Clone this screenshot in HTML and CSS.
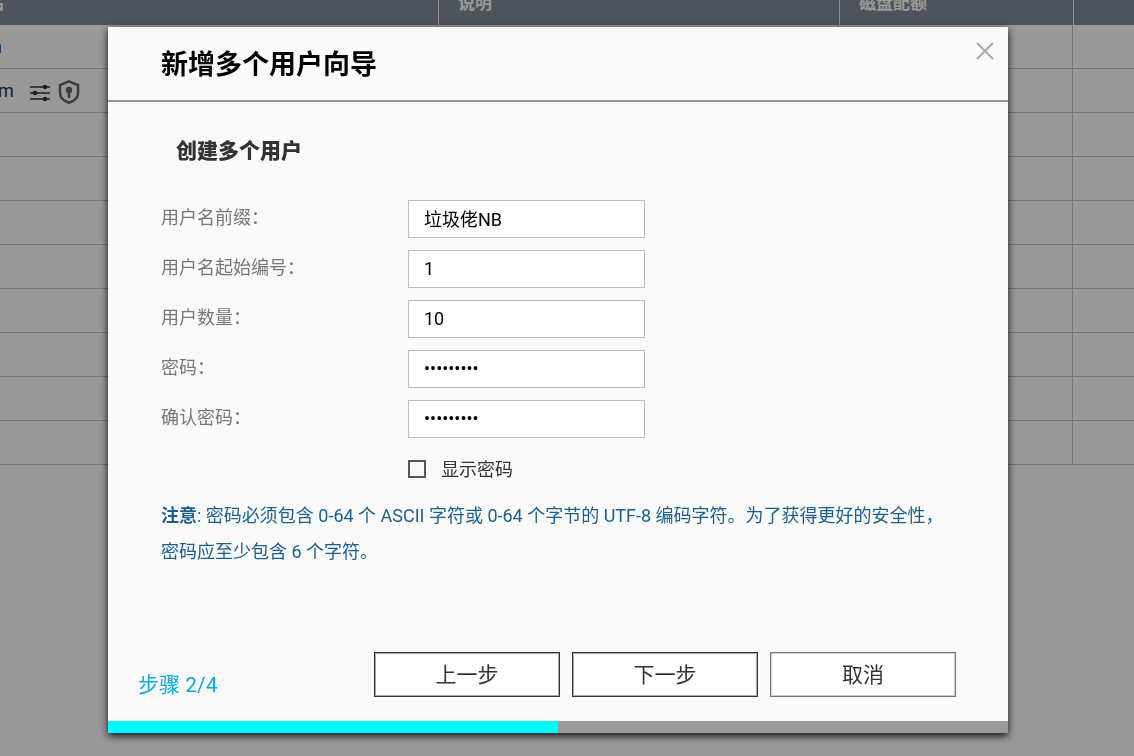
FILE: index.html
```
<!DOCTYPE html>
<html lang="zh-CN">
<head>
  <meta charset="UTF-8">
  <title>新增多个用户向导</title>
  <link rel="stylesheet" href="styles.css">
</head>
<body>
  <div class="page">
    <table class="user-table">
      <colgroup>
        <col class="col-name">
        <col class="col-desc">
        <col class="col-quota">
        <col>
      </colgroup>
      <thead>
        <tr><th>用户名</th><th>说明</th><th>磁盘配额</th><th></th></tr>
      </thead>
      <tbody>
        <tr><td>admin</td><td></td><td></td><td></td></tr>
        <tr>
          <td>
            <div class="user-cell">
              <span>random</span>
              <svg class="icon-sliders" width="22" height="22" viewBox="0 0 22 22">
                <path d="M1 7h20M1 13h20M1 19h20" stroke="#333" stroke-width="1.400"/>
                <circle cx="16" cy="7" r="2.300" fill="#333"/>
                <circle cx="6" cy="13" r="2.300" fill="#333"/>
                <circle cx="16" cy="19" r="2.300" fill="#333"/>
              </svg>
              <svg class="icon-shield" width="22" height="26" viewBox="0 0 22 26">
                <path d="M11 3.400L20 7v8c0 5-4 8-9 9.700C6 23 2 20 2 15V7z" fill="none" stroke="#666" stroke-width="2.500"/>
                <circle cx="11" cy="12" r="3.200" fill="#666"/>
                <path d="M11 13v6" stroke="#666" stroke-width="2.600" stroke-linecap="round"/>
              </svg>
            </div>
          </td>
          <td></td><td></td><td></td>
        </tr>
        <tr><td></td><td></td><td></td><td></td></tr>
        <tr><td></td><td></td><td></td><td></td></tr>
        <tr><td></td><td></td><td></td><td></td></tr>
        <tr><td></td><td></td><td></td><td></td></tr>
        <tr><td></td><td></td><td></td><td></td></tr>
        <tr><td></td><td></td><td></td><td></td></tr>
        <tr><td></td><td></td><td></td><td></td></tr>
        <tr><td></td><td></td><td></td><td></td></tr>
      </tbody>
    </table>
  </div>

  <div class="overlay">
    <form class="dialog" role="dialog" aria-labelledby="dialogTitle">
      <div class="dialog-header">
        <h1 id="dialogTitle">新增多个用户向导</h1>
        <button type="button" class="close-btn" aria-label="关闭">
          <svg width="18" height="18" viewBox="0 0 18 18">
            <path d="M1 1l16 16M17 1L1 17" stroke="#aaa" stroke-width="2"/>
          </svg>
        </button>
      </div>

      <div class="dialog-body">
        <h2>创建多个用户</h2>
        <div class="fields">
          <label for="prefix">用户名前缀：</label>
          <input type="text" id="prefix" value="垃圾佬NB">
          <label for="startNo">用户名起始编号：</label>
          <input type="text" id="startNo" value="1">
          <label for="count">用户数量：</label>
          <input type="text" id="count" value="10">
          <label for="password">密码：</label>
          <input type="password" id="password" value="password1">
          <label for="confirm">确认密码：</label>
          <input type="password" id="confirm" value="password1">
          <div class="show-password">
            <input type="checkbox" id="showPassword">
            <label for="showPassword">显示密码</label>
          </div>
        </div>
        <p class="note"><b>注意</b>: 密码必须包含 0-64 个 ASCII 字符或 0-64 个字节的 UTF-8 编码字符。为了获得更好的安全性，密码应至少包含 6 个字符。</p>
      </div>

      <div class="dialog-footer">
        <span class="step">步骤 2/4</span>
        <div class="buttons">
          <button type="button">上一步</button>
          <button type="button">下一步</button>
          <button type="button" class="cancel">取消</button>
        </div>
      </div>
      <div class="progress"><div class="progress-bar" style="width: 50%"></div></div>
    </form>
  </div>

  <script>
    const showPassword = document.getElementById('showPassword');

    showPassword.addEventListener('change', function () {
      const type = showPassword.checked ? 'text' : 'password';
      document.getElementById('password').type = type;
      document.getElementById('confirm').type = type;
    });
  </script>
</body>
</html>
```
FILE: styles.css
```
* {
  box-sizing: border-box;
}

body {
  margin: 0;
  font-family: Roboto, "Noto Sans CJK SC", sans-serif;
  font-size: 18px;
  color: #333;
  background-color: #fff;
}

input, button {
  font: inherit;
}

/* user list behind the dialog, scrolled a little */
.page {
  height: 100vh;
  overflow: hidden;
}

.user-table {
  width: calc(100% + 65px);
  margin: -19px 0 0 -65px;
  table-layout: fixed;
  border-collapse: separate;
  border-spacing: 0;
}

.col-name {
  width: 503px;
}

.col-desc {
  width: 401px;
}

.col-quota {
  width: 234px;
}

th {
  height: 44px;
  padding: 0 19px;
  font-size: 17px;
  line-height: 24px;
  text-align: left;
  color: #fff;
  background-color: #828a99;
}

th + th {
  border-left: 1px solid #eee;
}

td {
  height: 44px;
  padding: 0 17px;
  line-height: 24px;
  border-right: 1px solid #c4c4c4;
  border-bottom: 1px solid #c4c4c4;
}

td:last-child {
  border-right: none;
}

.user-cell {
  display: flex;
  align-items: center;
}

.icon-sliders {
  margin-left: 15px;
}

.icon-shield {
  margin-left: 7px;
}

.overlay {
  position: fixed;
  inset: 0;
  display: flex;
  justify-content: center;
  align-items: flex-start;
  padding: 27px 18px 0 0;
  background-color: rgba(0, 0, 0, 0.4);
}

.dialog {
  width: 100%;
  max-width: 900px;
  background-color: #fafafa;
  box-shadow: 0 3px 8px rgba(0, 0, 0, 0.9);
}

.dialog-header {
  display: flex;
  justify-content: space-between;
  align-items: flex-start;
  padding: 15px 14px 12px 53px;
  border-bottom: 2px solid #959595;
}

h1 {
  margin: 0;
  font-size: 27px;
  line-height: 46px;
  color: #000;
}

.close-btn {
  display: flex;
  padding: 0;
  border: none;
  background: none;
  cursor: pointer;
}

.dialog-body {
  padding: 34px 52px 0 53px;
}

h2 {
  margin: 0 0 34px 15px;
  font-size: 21px;
  font-weight: 900;
  line-height: 30px;
}

.fields {
  display: grid;
  grid-template-columns: 247px 237px;
  row-gap: 12px;
}

.fields > label {
  line-height: 36px;
  color: #777;
}

.fields > input {
  width: 100%;
  height: 38px;
  padding: 0 15px 2px;
  border: 1px solid #bdbdbd;
  color: #000;
  background-color: #fff;
}

.show-password {
  grid-column: 2;
  display: flex;
  align-items: center;
  gap: 15px;
  height: 38px;
}

.show-password input {
  appearance: none;
  width: 18px;
  height: 18px;
  margin: 0;
  border: 2px solid #555;
}

.show-password input:checked {
  background-color: #555;
}

.show-password label {
  padding-bottom: 3px;
}

.note {
  margin: 10px 0 0;
  line-height: 36px;
  color: #1a5f92;
}

.dialog-footer {
  display: flex;
  justify-content: space-between;
  align-items: center;
  padding: 82px 52px 24px 30px;
}

.step {
  padding-top: 20px;
  font-size: 21px;
  line-height: 24px;
  color: #0aaddf;
}

.buttons {
  display: flex;
  gap: 12px;
}

.buttons button {
  width: 186px;
  height: 45px;
  padding: 0 0 3px;
  font-size: 21px;
  color: #333;
  background-color: #fff;
  border: 1px solid #333;
  box-shadow: inset 0 0 0 1px #aaa;
  cursor: pointer;
}

.buttons .cancel {
  border-color: #777;
  box-shadow: inset 0 0 0 1px #ccc;
}

.progress {
  height: 12px;
  background-color: #999;
}

.progress-bar {
  height: 100%;
  background-color: #00f8ff;
}
```
